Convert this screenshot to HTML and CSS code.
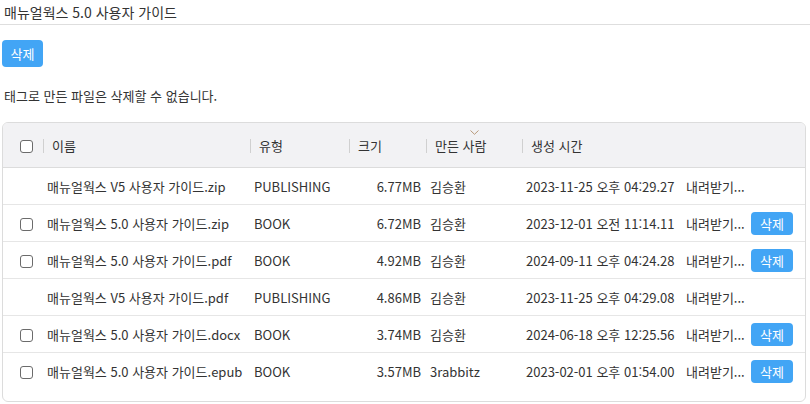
FILE: index.html
```html
<!DOCTYPE html>
<html lang="ko">
<head>
<meta charset="UTF-8" />
<meta name="viewport" content="width=device-width, initial-scale=1" />
<title>매뉴얼웍스 5.0 사용자 가이드</title>
<link rel="stylesheet" href="styles.css">
</head>
<body>

<div class="page-title">매뉴얼웍스 5.0 사용자 가이드</div>

<div class="content">
  <button class="btn btn-lg">삭제</button>
  <p class="notice">태그로 만든 파일은 삭제할 수 없습니다.</p>

  <div class="card">
    <table class="files">
      <colgroup>
        <col style="width:40px">
        <col style="width:207px">
        <col style="width:99px">
        <col style="width:77px">
        <col style="width:96px">
        <col style="width:160px">
        <col style="width:65px">
        <col>
      </colgroup>
      <thead>
        <tr>
          <th class="chk"><span class="box"></span></th>
          <th><span class="sep"></span>이름</th>
          <th><span class="sep"></span>유형</th>
          <th><span class="sep"></span>크기</th>
          <th class="sorted"><span class="sep"></span>만든 사람
            <svg class="sort" width="9" height="5" viewBox="0 0 9 5"><path d="M0.5 0.5 L4.5 4.3 L8.5 0.5" fill="none" stroke="#b89a7a" stroke-width="1"/></svg>
          </th>
          <th><span class="sep"></span>생성 시간</th>
          <th></th>
          <th></th>
        </tr>
      </thead>
      <tbody>
        <tr>
          <td class="chk"></td>
          <td>매뉴얼웍스 V5 사용자 가이드.zip</td>
          <td>PUBLISHING</td>
          <td class="num">6.77MB</td>
          <td>김승환</td>
          <td>2023-11-25 오후 04:29.27</td>
          <td>내려받기...</td>
          <td></td>
        </tr>
        <tr>
          <td class="chk"><span class="box"></span></td>
          <td>매뉴얼웍스 5.0 사용자 가이드.zip</td>
          <td>BOOK</td>
          <td class="num">6.72MB</td>
          <td>김승환</td>
          <td>2023-12-01 오전 11:14.11</td>
          <td>내려받기...</td>
          <td><button class="btn">삭제</button></td>
        </tr>
        <tr>
          <td class="chk"><span class="box"></span></td>
          <td>매뉴얼웍스 5.0 사용자 가이드.pdf</td>
          <td>BOOK</td>
          <td class="num">4.92MB</td>
          <td>김승환</td>
          <td>2024-09-11 오후 04:24.28</td>
          <td>내려받기...</td>
          <td><button class="btn">삭제</button></td>
        </tr>
        <tr>
          <td class="chk"></td>
          <td>매뉴얼웍스 V5 사용자 가이드.pdf</td>
          <td>PUBLISHING</td>
          <td class="num">4.86MB</td>
          <td>김승환</td>
          <td>2023-11-25 오후 04:29.08</td>
          <td>내려받기...</td>
          <td></td>
        </tr>
        <tr>
          <td class="chk"><span class="box"></span></td>
          <td>매뉴얼웍스 5.0 사용자 가이드.docx</td>
          <td>BOOK</td>
          <td class="num">3.74MB</td>
          <td>김승환</td>
          <td>2024-06-18 오후 12:25.56</td>
          <td>내려받기...</td>
          <td><button class="btn">삭제</button></td>
        </tr>
        <tr>
          <td class="chk"><span class="box"></span></td>
          <td>매뉴얼웍스 5.0 사용자 가이드.epub</td>
          <td>BOOK</td>
          <td class="num">3.57MB</td>
          <td>3rabbitz</td>
          <td>2023-02-01 오후 01:54.00</td>
          <td>내려받기...</td>
          <td><button class="btn">삭제</button></td>
        </tr>
      </tbody>
    </table>
  </div>
</div>

</body>
</html>
```

FILE: styles.css
```css
body {
  margin: 0;
  background: #fff;
  color: #333;
  font-family: "Noto Sans CJK KR", "Noto Sans", sans-serif;
  font-size: 13px;
}
.page-title {
  padding: 3px 4px 3px;
  font-size: 14px;
  line-height: 18px;
  border-bottom: 1px solid #dedede;
}
.content {
  padding: 15px 2px 0;
}
.btn {
  background: #42a5f5;
  color: #fff;
  border: none;
  border-radius: 4px;
  font-family: inherit;
  font-size: 13px;
  width: 42px;
  height: 23px;
  padding: 0;
  cursor: pointer;
}
.btn-lg {
  width: 41px;
  height: 27px;
}
.notice {
  margin: 20px 2px 0;
  line-height: 18px;
}
.card {
  margin: 17px 2px 0 0;
  border: 1px solid #dcdcdc;
  border-radius: 6px;
  overflow: hidden;
  padding-bottom: 12px;
}
.files {
  width: 100%;
  border-collapse: collapse;
  table-layout: fixed;
}
.files th {
  background: #f2f2f4;
  font-weight: normal;
  text-align: left;
  height: 44px;
  padding: 0;
  border-bottom: 1px solid #dcdcdc;
  white-space: nowrap;
}
.files th.sorted {
  position: relative;
}
.sort {
  position: absolute;
  left: 44px;
  top: 7px;
}
.sep {
  display: inline-block;
  width: 1px;
  height: 14px;
  background: #d0d0d0;
  vertical-align: -2px;
  margin-right: 8px;
}
.files td {
  height: 36px;
  padding: 0 0 0 4px;
  border-bottom: 1px solid #e6e6e6;
  white-space: nowrap;
  overflow: hidden;
}
.files tbody tr:last-child td {
  border-bottom: none;
}
.files td.num {
  text-align: right;
  padding-right: 5px;
}
.files .chk {
  padding-left: 17px;
}
.box {
  display: inline-block;
  width: 11px;
  height: 11px;
  border: 1px solid #6b6b6b;
  border-radius: 3px;
  vertical-align: middle;
  background: #fff;
}
```
